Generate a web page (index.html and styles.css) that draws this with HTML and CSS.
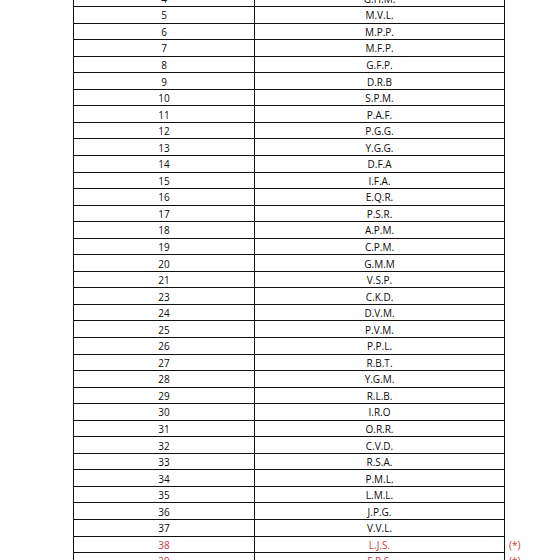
FILE: index.html
```html
<!DOCTYPE html>
<html lang="es">
<head>
<meta charset="utf-8">
<link rel="stylesheet" href="styles.css">
</head>
<body>
<div class="table">
  <div class="row"><div class="c1">4</div><div class="c2">G.H.M.</div><div class="c3"></div></div>
  <div class="row"><div class="c1">5</div><div class="c2">M.V.L.</div><div class="c3"></div></div>
  <div class="row"><div class="c1">6</div><div class="c2">M.P.P.</div><div class="c3"></div></div>
  <div class="row"><div class="c1">7</div><div class="c2">M.F.P.</div><div class="c3"></div></div>
  <div class="row"><div class="c1">8</div><div class="c2">G.F.P.</div><div class="c3"></div></div>
  <div class="row"><div class="c1">9</div><div class="c2">D.R.B</div><div class="c3"></div></div>
  <div class="row"><div class="c1">10</div><div class="c2">S.P.M.</div><div class="c3"></div></div>
  <div class="row"><div class="c1">11</div><div class="c2">P.A.F.</div><div class="c3"></div></div>
  <div class="row"><div class="c1">12</div><div class="c2">P.G.G.</div><div class="c3"></div></div>
  <div class="row"><div class="c1">13</div><div class="c2">Y.G.G.</div><div class="c3"></div></div>
  <div class="row"><div class="c1">14</div><div class="c2">D.F.A</div><div class="c3"></div></div>
  <div class="row"><div class="c1">15</div><div class="c2">I.F.A.</div><div class="c3"></div></div>
  <div class="row"><div class="c1">16</div><div class="c2">E.Q.R.</div><div class="c3"></div></div>
  <div class="row"><div class="c1">17</div><div class="c2">P.S.R.</div><div class="c3"></div></div>
  <div class="row"><div class="c1">18</div><div class="c2">A.P.M.</div><div class="c3"></div></div>
  <div class="row"><div class="c1">19</div><div class="c2">C.P.M.</div><div class="c3"></div></div>
  <div class="row"><div class="c1">20</div><div class="c2">G.M.M</div><div class="c3"></div></div>
  <div class="row"><div class="c1">21</div><div class="c2">V.S.P.</div><div class="c3"></div></div>
  <div class="row"><div class="c1">23</div><div class="c2">C.K.D.</div><div class="c3"></div></div>
  <div class="row"><div class="c1">24</div><div class="c2">D.V.M.</div><div class="c3"></div></div>
  <div class="row"><div class="c1">25</div><div class="c2">P.V.M.</div><div class="c3"></div></div>
  <div class="row"><div class="c1">26</div><div class="c2">P.P.L.</div><div class="c3"></div></div>
  <div class="row"><div class="c1">27</div><div class="c2">R.B.T.</div><div class="c3"></div></div>
  <div class="row"><div class="c1">28</div><div class="c2">Y.G.M.</div><div class="c3"></div></div>
  <div class="row"><div class="c1">29</div><div class="c2">R.L.B.</div><div class="c3"></div></div>
  <div class="row"><div class="c1">30</div><div class="c2">I.R.O</div><div class="c3"></div></div>
  <div class="row"><div class="c1">31</div><div class="c2">O.R.R.</div><div class="c3"></div></div>
  <div class="row"><div class="c1">32</div><div class="c2">C.V.D.</div><div class="c3"></div></div>
  <div class="row"><div class="c1">33</div><div class="c2">R.S.A.</div><div class="c3"></div></div>
  <div class="row"><div class="c1">34</div><div class="c2">P.M.L.</div><div class="c3"></div></div>
  <div class="row"><div class="c1">35</div><div class="c2">L.M.L.</div><div class="c3"></div></div>
  <div class="row"><div class="c1">36</div><div class="c2">J.P.G.</div><div class="c3"></div></div>
  <div class="row"><div class="c1">37</div><div class="c2">V.V.L.</div><div class="c3"></div></div>
  <div class="row red"><div class="c1">38</div><div class="c2">L.J.S.</div><div class="c3">(*)</div></div>
  <div class="row red"><div class="c1">39</div><div class="c2">F.P.S.</div><div class="c3">(*)</div></div>
</div>
</body>
</html>
```
FILE: styles.css
```css
html, body {
  margin: 0;
  padding: 0;
  background: #ffffff;
  overflow: hidden;
}
body {
  height: 560px;
  font-family: "Open Sans", "Liberation Sans", sans-serif;
  font-size: 10px;
  color: #0a0a0a;
}
.table {
  margin-top: -10.5px;
  margin-left: 73px;
  display: flex;
  flex-direction: column;
}
.row {
  display: grid;
  grid-template-columns: 181px 251px 40px;
  height: 16.56px;
}
.c1, .c2 {
  box-sizing: border-box;
  border-top: 1px solid #111;
  border-left: 1px solid #111;
  display: flex;
  align-items: center;
  justify-content: center;
  padding-top: 1px;
}
.c2 {
  border-right: 1px solid #111;
}
.c3 {
  display: flex;
  align-items: center;
  padding-left: 4px;
  padding-top: 2px;
}
.red {
  color: #c8393b;
}
```
